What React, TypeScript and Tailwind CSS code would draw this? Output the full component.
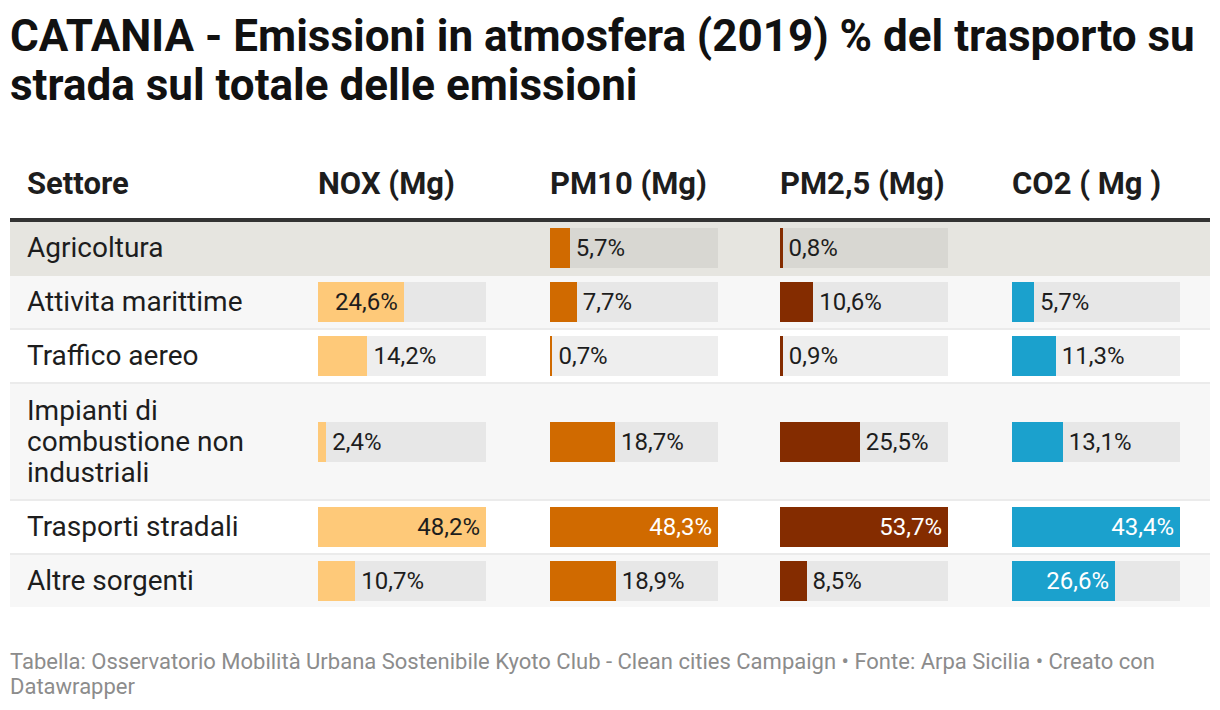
import React from "react";

type Cell = { v: number; label: string; inside: boolean } | null;

const cols = [
  { max: 48.2, color: "bg-[#fec979]", textInside: "text-[#1d1d1d]" },
  { max: 48.3, color: "bg-[#d06a00]", textInside: "text-white" },
  { max: 53.7, color: "bg-[#842c00]", textInside: "text-white" },
  { max: 43.4, color: "bg-[#1ba1cd]", textInside: "text-white" },
];

type Row = { name: string; cells: Cell[]; bg: string; track: string; border: string; multi?: boolean };

const rows: Row[] = [
  {
    name: "Agricoltura",
    bg: "bg-[#e6e5e0]",
    track: "bg-[#d8d7d2]",
    border: "border-b-2 border-[#e6e5e0]",
    cells: [null, { v: 5.7, label: "5,7%", inside: false }, { v: 0.8, label: "0,8%", inside: false }, null],
  },
  {
    name: "Attivita marittime",
    bg: "bg-[#f7f7f7]",
    track: "bg-[#e7e7e7]",
    border: "border-b-2 border-[#ebebeb]",
    cells: [
      { v: 24.6, label: "24,6%", inside: true },
      { v: 7.7, label: "7,7%", inside: false },
      { v: 10.6, label: "10,6%", inside: false },
      { v: 5.7, label: "5,7%", inside: false },
    ],
  },
  {
    name: "Traffico aereo",
    bg: "bg-white",
    track: "bg-[#eeeeee]",
    border: "border-b-2 border-[#ebebeb]",
    cells: [
      { v: 14.2, label: "14,2%", inside: false },
      { v: 0.7, label: "0,7%", inside: false },
      { v: 0.9, label: "0,9%", inside: false },
      { v: 11.3, label: "11,3%", inside: false },
    ],
  },
  {
    name: "Impianti di combustione non industriali",
    bg: "bg-[#f7f7f7]",
    track: "bg-[#e7e7e7]",
    border: "border-b-2 border-[#ebebeb]",
    multi: true,
    cells: [
      { v: 2.4, label: "2,4%", inside: false },
      { v: 18.7, label: "18,7%", inside: false },
      { v: 25.5, label: "25,5%", inside: false },
      { v: 13.1, label: "13,1%", inside: false },
    ],
  },
  {
    name: "Trasporti stradali",
    bg: "bg-white",
    track: "bg-[#eeeeee]",
    border: "border-b-2 border-[#ebebeb]",
    cells: [
      { v: 48.2, label: "48,2%", inside: true },
      { v: 48.3, label: "48,3%", inside: true },
      { v: 53.7, label: "53,7%", inside: true },
      { v: 43.4, label: "43,4%", inside: true },
    ],
  },
  {
    name: "Altre sorgenti",
    bg: "bg-[#f7f7f7]",
    track: "bg-[#e7e7e7]",
    border: "border-b-0",
    cells: [
      { v: 10.7, label: "10,7%", inside: false },
      { v: 18.9, label: "18,9%", inside: false },
      { v: 8.5, label: "8,5%", inside: false },
      { v: 26.6, label: "26,6%", inside: true },
    ],
  },
];

const BAR_W = 168;

function BarCell({ cell, ci, track }: { cell: Cell; ci: number; track: string }) {
  if (!cell) return <div className="pl-[16px]" />;
  const col = cols[ci];
  const w = Math.max(2, (cell.v / col.max) * BAR_W);
  return (
    <div className="pl-[16px] flex items-center">
      <div className={`relative flex h-[40px] w-[168px] ${track}`}>
        <div className={`h-full ${col.color} flex items-center justify-end`} style={{ width: w }}>
          {cell.inside && (
            <span className={`pr-[6px] text-[24px] leading-none ${col.textInside}`}>{cell.label}</span>
          )}
        </div>
        {!cell.inside && (
          <span className="ml-[6px] flex items-center text-[24px] leading-none text-[#1d1d1d]">{cell.label}</span>
        )}
      </div>
    </div>
  );
}

export default function App() {
  return (
    <div
      className="w-[1220px] h-[710px] bg-white overflow-hidden"
      style={{ fontFamily: "Roboto, 'Liberation Sans', sans-serif" }}
    >
      <div className="pl-[10px] pr-[10px] pt-[12px]">
        <h1 className="text-[44px] leading-[49px] font-bold text-[#111111]">
          CATANIA - Emissioni in atmosfera (2019) % del trasporto su strada sul totale delle emissioni
        </h1>
        <div className="mt-[40px] w-[1200px]">
          <div className="grid grid-cols-[292px_232px_230px_232px_214px] border-b-[4px] border-[#333333] text-[31px] leading-[36px] font-bold text-[#1d1d1d]">
            <div className="pl-[17px] pt-[16px] pb-[16px]">Settore</div>
            <div className="pl-[16px] pt-[16px] pb-[16px]">NOX (Mg)</div>
            <div className="pl-[16px] pt-[16px] pb-[16px]">PM10 (Mg)</div>
            <div className="pl-[16px] pt-[16px] pb-[16px]">PM2,5 (Mg)</div>
            <div className="pl-[16px] pt-[16px] pb-[16px]">CO2 ( Mg )</div>
          </div>
          {rows.map((r) => (
            <div key={r.name} className={`grid grid-cols-[292px_232px_230px_232px_214px] ${r.border} ${r.bg}`}>
              <div
                className={`pl-[17px] pr-[8px] ${
                  r.multi ? "py-[11px] leading-[31px]" : "py-[10px] leading-[32px]"
                } text-[28px] text-[#1d1d1d]`}
              >
                {r.multi ? (
                  <>
                    Impianti di
                    <br />
                    combustione non
                    <br />
                    industriali
                  </>
                ) : (
                  r.name
                )}
              </div>
              {r.cells.map((c, i) => (
                <BarCell key={i} cell={c} ci={i} track={r.track} />
              ))}
            </div>
          ))}
        </div>
        <div className="mt-[42px] text-[22px] leading-[25px] text-[#8c8c8c]">
          Tabella: Osservatorio Mobilità Urbana Sostenibile Kyoto Club - Clean cities Campaign • Fonte: Arpa Sicilia •
          Creato con Datawrapper
        </div>
      </div>
    </div>
  );
}
